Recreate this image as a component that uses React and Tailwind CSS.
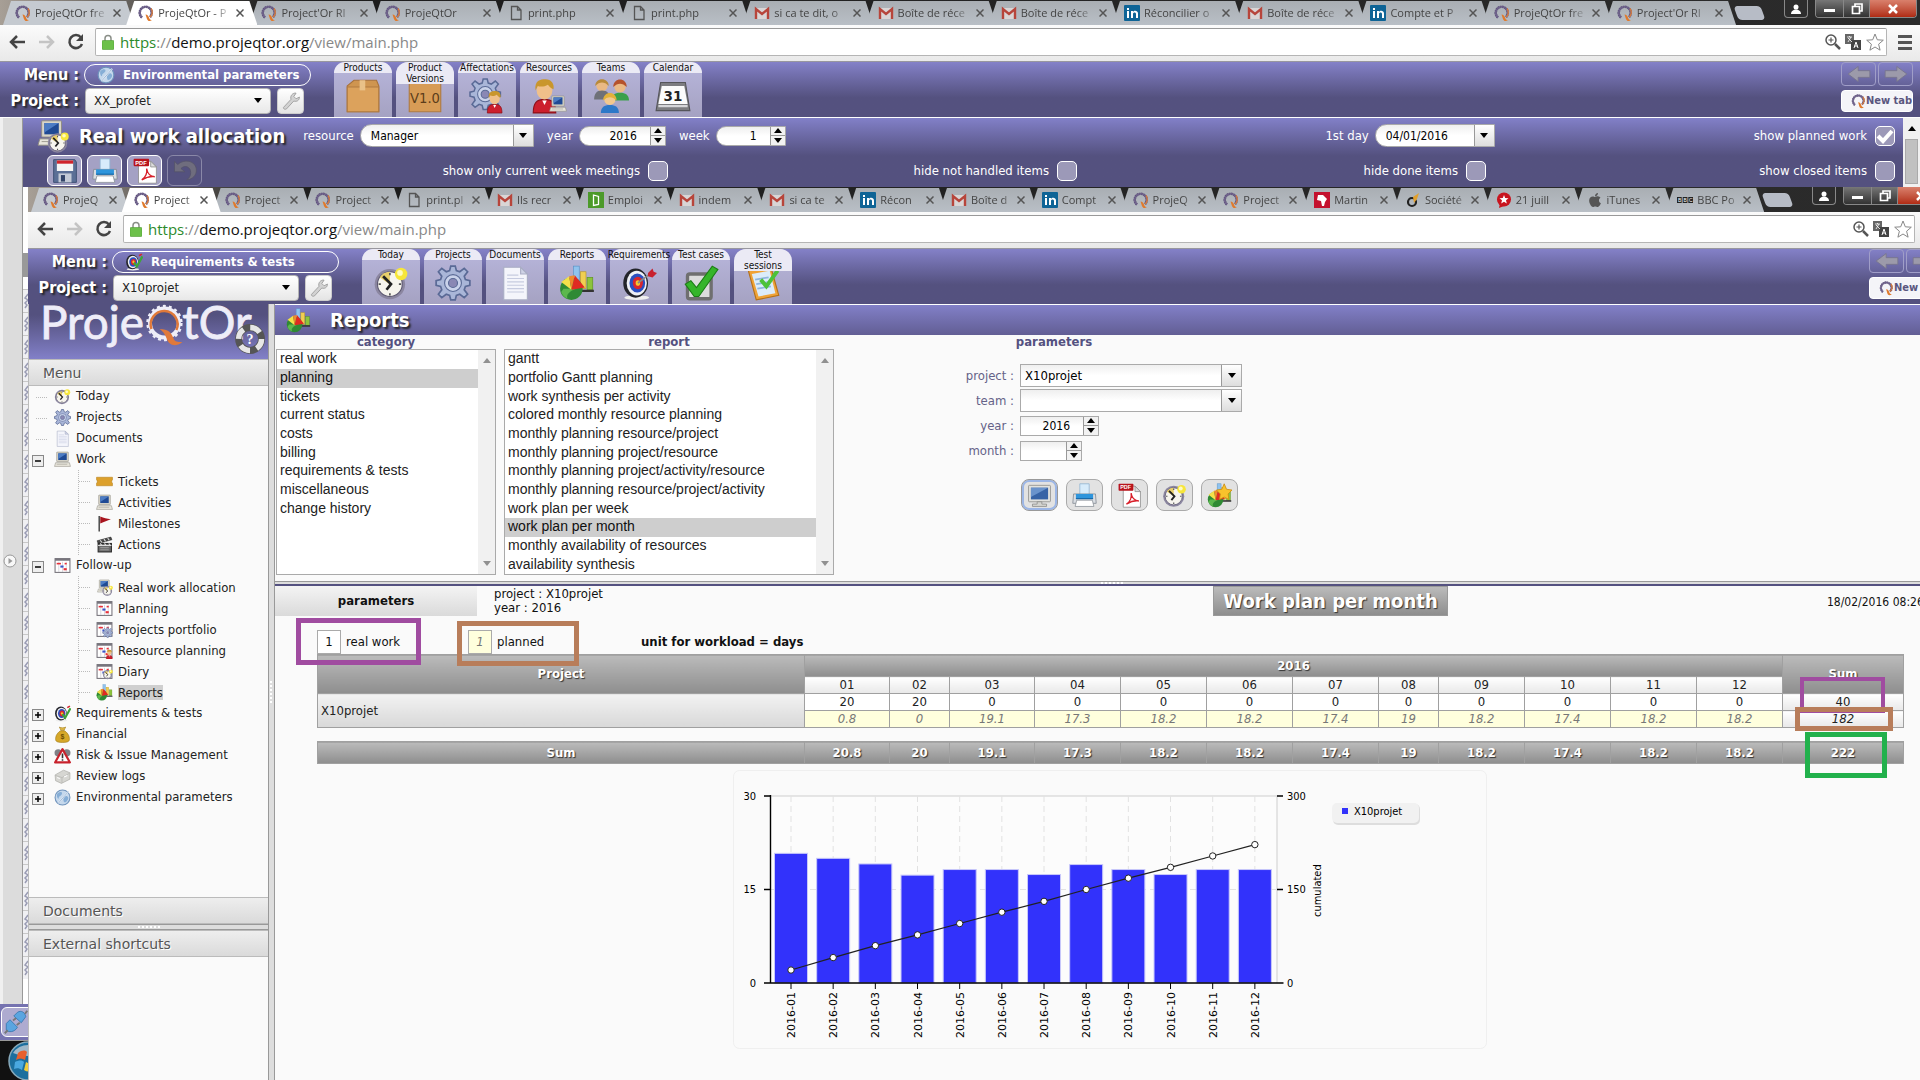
import { useState } from "react";
import { FaApple } from "react-icons/fa";

const outerTabs = [
  ["q", "ProjeQtOr fre"],
  ["q", "ProjeQtOr - P"],
  ["q", "Project'Or RI"],
  ["q", "ProjeQtOr"],
  ["page", "print.php"],
  ["page", "print.php"],
  ["gmail", "si ca te dit, o"],
  ["gmail", "Boîte de réce"],
  ["gmail", "Boîte de réce"],
  ["linkedin", "Réconcilier o"],
  ["gmail", "Boîte de réce"],
  ["linkedin", "Compte et P"],
  ["q", "ProjeQtOr fre"],
  ["q", "Project'Or RI"],
];

const innerTabs = [
  ["q", "ProjeQ"],
  ["q", "Project"],
  ["q", "Project"],
  ["q", "Project"],
  ["page", "print.pl"],
  ["gmail", "Ils recr"],
  ["green", "Emploi"],
  ["gmail", "indem"],
  ["gmail", "si ca te"],
  ["linkedin", "Récon"],
  ["gmail", "Boîte d"],
  ["linkedin", "Compt"],
  ["q", "ProjeQ"],
  ["q", "Project"],
  ["africa", "Martin"],
  ["societe", "Société"],
  ["star", "21 juill"],
  ["apple", "iTunes"],
  ["bbc", "BBC Po"],
];

const outerItems = [
  ["box", "Products"],
  ["version", "Product Versions"],
  ["affect", "Affectations"],
  ["resource", "Resources"],
  ["team", "Teams"],
  ["calendar", "Calendar"],
];

const innerItems = [
  ["clock", "Today"],
  ["gear", "Projects"],
  ["doc", "Documents"],
  ["report", "Reports"],
  ["target", "Requirements"],
  ["check", "Test cases"],
  ["session", "Test sessions"],
];

const tree = [
  { icon: "clock", label: "Today" },
  { icon: "gear", label: "Projects" },
  { icon: "doc", label: "Documents" },
  {
    icon: "computer",
    label: "Work",
    children: [
      ["ticket", "Tickets"],
      ["computer", "Activities"],
      ["flag", "Milestones"],
      ["clap", "Actions"],
    ],
  },
  {
    icon: "planning",
    label: "Follow-up",
    children: [
      ["allocation", "Real work allocation"],
      ["planning", "Planning"],
      ["portfolio", "Projects portfolio"],
      ["resplan", "Resource planning"],
      ["diary", "Diary"],
      ["report", "Reports"],
    ],
  },
  { icon: "target2", label: "Requirements & tests", closed: true },
  { icon: "money", label: "Financial", closed: true },
  { icon: "risk", label: "Risk & Issue Management", closed: true },
  { icon: "review", label: "Review logs", closed: true },
  { icon: "globe", label: "Environmental parameters", closed: true },
];

const categories = [
  "real work",
  "planning",
  "tickets",
  "current status",
  "costs",
  "billing",
  "requirements & tests",
  "miscellaneous",
  "change history",
];

const reports = [
  "gantt",
  "portfolio Gantt planning",
  "work synthesis per activity",
  "colored monthly resource planning",
  "monthly planning resource/project",
  "monthly planning project/resource",
  "monthly planning project/activity/resource",
  "monthly planning resource/project/activity",
  "work plan per week",
  "work plan per month",
  "monthly availability of resources",
  "availability synthesis",
];

const months = [
  { m: "01", real: 20, plan: "0.8", sum: 20.8 },
  { m: "02", real: 20, plan: "0", sum: 20 },
  { m: "03", real: 0, plan: "19.1", sum: 19.1 },
  { m: "04", real: 0, plan: "17.3", sum: 17.3 },
  { m: "05", real: 0, plan: "18.2", sum: 18.2 },
  { m: "06", real: 0, plan: "18.2", sum: 18.2 },
  { m: "07", real: 0, plan: "17.4", sum: 17.4 },
  { m: "08", real: 0, plan: "19", sum: 19 },
  { m: "09", real: 0, plan: "18.2", sum: 18.2 },
  { m: "10", real: 0, plan: "17.4", sum: 17.4 },
  { m: "11", real: 0, plan: "18.2", sum: 18.2 },
  { m: "12", real: 0, plan: "18.2", sum: 18.2 },
];

/* ---------- icons, all on a 32x32 grid ---------- */

const ClockArt = (
  <>
    <circle cx="15" cy="17" r="13.5" fill="#8b86a0" />
    <circle cx="15" cy="17" r="11" fill="#f7f5ee" stroke="#5d5872" strokeWidth="1" />
    <path d="M15 17V6A11 11 0 0 0 6 11Z" fill="#e9cf6a" />
    <path d="M9 10l7 7-4 5" fill="none" stroke="#222" strokeWidth="2.4" />
    <path d="M15 7v2M15 25v2M5 17h2M23 17h2" stroke="#555" strokeWidth="1.5" />
    <circle cx="25" cy="8" r="5.5" fill="#f7e63a" />
    <circle cx="24" cy="7" r="2.5" fill="#fffbc0" />
  </>
);

const GearArt = (
  <>
    <path
      d="M14 1h4l1 4 3 1 4-3 3 3-3 4 1 3 4 1v4l-4 1-1 3 3 4-3 3-4-3-3 1-1 4h-4l-1-4-3-1-4 3-3-3 3-4-1-3-4-1v-4l4-1 1-3-3-4 3-3 4 3 3-1z"
      fill="#a9b6d8"
      stroke="#5a6a96"
      strokeWidth="1.5"
    />
    <circle cx="16" cy="16" r="7.5" fill="#c9d2ea" stroke="#5a6a96" />
    <circle cx="16" cy="16" r="4" fill="#8a88b4" stroke="#5a6a96" />
  </>
);

const ComputerArt = (
  <>
    <rect x="5" y="2" width="22" height="18" rx="1" fill="#d8d5c8" stroke="#8d8a80" />
    <rect x="8" y="4.5" width="16" height="12.5" fill="#1f4a94" />
    <path d="M8 4.5h16L8 15z" fill="#4c7cc4" />
    <path d="M3 22h26l2 7H1z" fill="#e8e6dc" stroke="#8d8a80" />
    <path d="M5 25h20" stroke="#9a978c" />
  </>
);

const PlanArt = (
  <>
    <rect x="2" y="3" width="28" height="26" fill="#fff" stroke="#77747c" strokeWidth="2" />
    <path d="M2 5h28" stroke="#77747c" strokeWidth="4" />
    <path d="M9 9v19M16 9v19M23 9v19" stroke="#b9b6c2" />
    <rect x="5" y="11" width="8" height="3" fill="#e8303a" />
    <rect x="12" y="16" width="6" height="4" fill="#3b53c8" />
    <rect x="18" y="21" width="6" height="4" fill="#e8303a" />
    <rect x="20" y="11" width="4" height="3" fill="#e8303a" />
  </>
);

const PersonArt = (
  <>
    <path d="M2 31c0-9 3-12 10-12s10 3 10 12z" fill="#cc1f2d" stroke="#8b1019" />
    <ellipse cx="12" cy="11" rx="7" ry="8" fill="#f0c08a" />
    <path d="M4 11C3 2 8 1 13 1s8 4 7 9c-3-1-4-3-5-4-3 2-7 2-9 1z" fill="#c9962c" />
    <path d="M10 20l2 4 2-4" fill="#fff" />
  </>
);

const ReportArt = (
  <>
    <rect x="13" y="1" width="5" height="15" fill="#8fc3ee" stroke="#5a93c8" strokeWidth=".6" />
    <rect x="19" y="6" width="5" height="15" fill="#f0cf52" stroke="#b8982c" strokeWidth=".6" />
    <rect x="25" y="11" width="5" height="11" fill="#8cc43c" stroke="#5f9420" strokeWidth=".6" />
    <path d="M20 22h11v2H20z" fill="#333" />
    <circle cx="11" cy="21" r="10" fill="#2f8a34" />
    <path d="M2 24a9 9 0 0 0 6 6c-3-4 4-9 9-9H4z" fill="#5cb84e" />
    <path d="M11 22L2 15l7-5z" fill="#f4e04a" />
    <path d="M11 22L14 9l9 11z" fill="#e02a22" />
    <path d="M11 22L9 10l5-1z" fill="#f08a2c" />
  </>
);

const TargetArt = (
  <>
    <ellipse cx="14" cy="29" rx="11" ry="2" fill="#eee" />
    <ellipse cx="13" cy="16" rx="11" ry="13" fill="#23242a" />
    <ellipse cx="14" cy="16" rx="9" ry="11" fill="#eef0f4" />
    <ellipse cx="14.500" cy="16" rx="7" ry="8.500" fill="#2b4fc0" />
    <ellipse cx="15" cy="16" rx="4.500" ry="5.500" fill="#d8262e" />
    <ellipse cx="15" cy="16" rx="2" ry="2.500" fill="#f6c72c" />
  </>
);

const PrinterArt = (
  <>
    <path d="M10 1h12v14H10z" fill="#d7ecfb" stroke="#8fb4d0" />
    <path d="M2 14h28l1 12H1z" fill="#d9dde2" stroke="#7f8790" />
    <path d="M5 14h22v6H5z" fill="#2e95dc" />
    <path d="M6 22h20l2 8H4z" fill="#fff" stroke="#8a9199" />
    <path d="M5 20h22" stroke="#1668a8" strokeWidth="1.500" />
  </>
);

const PdfArt = (
  <>
    <path d="M8 4h15l7 7v20H8z" fill="#fff" stroke="#8c8c8c" />
    <path d="M23 4v7h7z" fill="#ddd" stroke="#8c8c8c" />
    <rect x="2" y="1" width="19" height="9" rx="1" fill="#b8141c" />
    <text x="4" y="8" fontSize="7" fontWeight="bold" fill="#fff" fontFamily="Liberation Sans">PDF</text>
    <path d="M12 27c5-3 7-9 6-14 1 6 5 10 10 10-6-1-11 1-16 4z" fill="none" stroke="#d8202a" strokeWidth="1.700" />
  </>
);

const art = {
  clock: ClockArt,
  gear: GearArt,
  computer: ComputerArt,
  planning: PlanArt,
  report: ReportArt,
  printer: PrinterArt,
  pdf: PdfArt,
  doc: (
    <>
      <path d="M6 2h15l6 6v23H6z" fill="#f4f5fb" stroke="#a9adc4" />
      <path d="M21 2v6h6z" fill="#cfd3e6" stroke="#a9adc4" />
      <path d="M9 9h10M9 12h15M9 15h15M9 18h15M9 21h15M9 24h15" stroke="#c6cbe0" />
    </>
  ),
  target: (
    <>
      {TargetArt}
      <path d="M15 16l12-9" stroke="#888" strokeWidth="1.500" />
      <path d="M24 7l4-4 1 3 3 1-4 4-4-1z" fill="#c8202e" />
    </>
  ),
  target2: (
    <>
      {TargetArt}
      <path d="M16 17l5 7L31 6" fill="none" stroke="#3da43a" strokeWidth="4" />
      <path d="M25 5l5-3" stroke="#d8262e" strokeWidth="3" />
    </>
  ),
  check: (
    <>
      <rect x="4" y="8" width="21" height="22" rx="2" fill="#dcdcdc" stroke="#6f6f6f" strokeWidth="3" />
      <path d="M2 17l5-3 5 6L26 1l5 3-17 24h-4z" fill="#35b52a" stroke="#1c7d16" />
    </>
  ),
  session: (
    <>
      <path d="M3 5l20-3 7 25-20 4z" fill="#f0a336" stroke="#b3701a" />
      <path d="M6 8l16-3 5 20-15 3z" fill="#dcecfa" />
      <path d="M9 13l12-2M10 17l12-2M11 21l12-2" stroke="#8fb6de" strokeWidth="1.500" />
      <path d="M8 1h9v4H9z" fill="#37993a" />
      <path d="M14 13l5 6L29 5" fill="none" stroke="#4cc23a" strokeWidth="3.500" />
    </>
  ),
  box: (
    <>
      <path d="M2 7l6-5h20l2 5v23H2z" fill="#cf9550" stroke="#a8713a" />
      <path d="M2 8h28v22H2z" fill="#dca25c" stroke="#b07b40" />
      <path d="M13 2h5v9h-5z" fill="#e9c188" />
    </>
  ),
  version: (
    <>
      <path d="M2 4h28v26H2z" fill="#d79c56" stroke="#b07b40" />
      <text x="16" y="22" textAnchor="middle" fontSize="13" fill="#5c3d1a" fontFamily="DejaVu Sans Condensed">V1.0</text>
    </>
  ),
  resource: (
    <>
      {PersonArt}
      <g transform="translate(16 15) scale(.5)">{ComputerArt}</g>
    </>
  ),
  affect: (
    <>
      <g transform="scale(.9)">{GearArt}</g>
      <g transform="translate(15 11) scale(.65)">{PersonArt}</g>
    </>
  ),
  team: (
    <>
      <circle cx="8" cy="7" r="5" fill="#eab984" />
      <path d="M2 7c0-8 12-8 12 0-4-4-8-4-12 0z" fill="#b98a3a" />
      <path d="M1 19c0-5 2-8 7-8s7 3 7 8z" fill="#6f7178" />
      <circle cx="24" cy="8" r="5" fill="#eab984" />
      <path d="M18 8c0-9 12-9 12 0-4-4-8-4-12 0z" fill="#b5522c" />
      <path d="M17 20c0-5 2-7 7-7s8 2 8 7z" fill="#3aa04a" />
      <circle cx="15" cy="19" r="5" fill="#f2c88e" />
      <path d="M9 20c0-9 12-9 12 0-4-4-8-4-12 0z" fill="#e2b13a" />
      <path d="M7 31c0-5 3-7 8-7s8 2 8 7z" fill="#2d78c8" />
    </>
  ),
  calendar: (
    <>
      <path d="M5 4h22l4 25H1z" fill="#7c7c80" stroke="#55555a" />
      <path d="M6 7h20l3 16H3z" fill="#fbfbfb" />
      <path d="M3 25h26" stroke="#d5d5d8" strokeWidth="2" />
      <text x="16" y="20" textAnchor="middle" fontSize="12" fontWeight="bold" fill="#222" fontFamily="DejaVu Sans">31</text>
    </>
  ),
  ticket: <path d="M1 8h30v5c-2 1-2 5 0 6v5H1v-5c2-1 2-5 0-6z" fill="#dca02c" stroke="#b47c14" />,
  flag: (
    <>
      <path d="M6 2v29" stroke="#333" strokeWidth="2.500" />
      <path d="M8 3c7 3 12 4 20 5-7 2-12 5-20 8z" fill="#a8141e" />
    </>
  ),
  clap: (
    <>
      <path d="M2 9L28 2l2 5L4 14z" fill="#4a4a4a" stroke="#222" />
      <rect x="4" y="14" width="25" height="16" fill="#6a6a6a" stroke="#2a2a2a" strokeWidth="2" />
      <path d="M8 8l3 4M15 6l3 4M22 4l3 4M4 18h25M8 14l3 4M16 14l3 4M24 14l3 4" stroke="#ddd" strokeWidth="2" />
      <path d="M8 22h16M8 26h16" stroke="#aaa" strokeWidth="1.500" />
    </>
  ),
  allocation: (
    <>
      <g transform="translate(2 0) scale(.85)">{ComputerArt}</g>
      <g transform="translate(11 11) scale(.68)">{ClockArt}</g>
    </>
  ),
  portfolio: (
    <>
      {PlanArt}
      <g transform="translate(12 12) scale(.62)">{GearArt}</g>
    </>
  ),
  resplan: (
    <>
      {PlanArt}
      <g transform="translate(18 14) scale(.58)">{PersonArt}</g>
    </>
  ),
  diary: (
    <>
      {PlanArt}
      <g transform="translate(12 11) scale(.64)">{ClockArt}</g>
    </>
  ),
  money: (
    <>
      <path d="M12 9h8c8 6 9 11 9 16 0 4-3 6-13 6S3 29 3 25c0-5 1-10 9-16z" fill="#d6a82a" stroke="#96700e" />
      <path d="M10 2c4 2 8 2 12 0l-3 6h-6z" fill="#e5bd4a" stroke="#96700e" />
      <text x="16" y="25" textAnchor="middle" fontSize="13" fontWeight="bold" fill="#6b4e06" fontFamily="Liberation Sans">$</text>
    </>
  ),
  risk: (
    <>
      <circle cx="8" cy="11" r="7" fill="#7f8086" />
      <circle cx="24" cy="11" r="7" fill="#7f8086" />
      <path d="M16 4l14 25H2z" fill="#fff" stroke="#c8222c" strokeWidth="4" strokeLinejoin="round" />
      <path d="M16 12v9M16 23v3" stroke="#333" strokeWidth="3" />
    </>
  ),
  review: (
    <>
      <path d="M2 13l16-9 12 5v12L14 29 3 24z" fill="#d6d6d2" stroke="#9a9a96" />
      <path d="M3 14l12 4 14-8M15 18v10" fill="none" stroke="#aaaaa6" />
      <path d="M6 18l5 2M19 17l6-3" stroke="#fff" strokeWidth="2" />
    </>
  ),
  globe: (
    <>
      <circle cx="16" cy="16" r="14" fill="#c5d8ec" stroke="#6f93bc" strokeWidth="2" />
      <path d="M6 9c5-5 10-4 9 0s-6 4-6 8-5-2-3-8zM18 14c6-3 11 1 8 6s-7 7-8 2 0-5 0-8z" fill="#86aed6" />
      <path d="M8 27L27 5" stroke="#eef4fb" strokeWidth="3" />
      <path d="M8 27L27 5" stroke="#5c84b4" />
    </>
  ),
  disk: (
    <>
      <path d="M2 2h26l2 3v25H2z" fill="#5b6f96" stroke="#34456a" />
      <rect x="6" y="3" width="20" height="13" fill="#f4f4f4" />
      <rect x="6" y="3" width="20" height="4" fill="#d0242c" />
      <rect x="8" y="19" width="16" height="11" fill="#c4cad6" />
      <rect x="11" y="21" width="5" height="8" fill="#34456a" />
    </>
  ),
  undo: <path d="M3 4v13h13l-5-4c5-5 12-2 12 5 0 4-2 7-5 9 8-1 12-6 12-12C30 4 16 0 7 8z" fill="#6f6d7e" stroke="#55536a" />,
  screen: (
    <>
      <rect x="2" y="3" width="28" height="21" rx="1" fill="#e2e2de" stroke="#8b8b88" />
      <rect x="5" y="6" width="22" height="15" fill="#3763a6" />
      <path d="M5 6h22L5 18z" fill="#6a93cc" />
      <path d="M13 24h6v3h6v3H7v-3h6z" fill="#d4d4d0" stroke="#8b8b88" />
    </>
  ),
  star: (
    <>
      {ReportArt}
      <path d="M22 1l3 7 7 1-5 5 1 7-6-3-6 3 1-7-5-5 7-1z" fill="#f8c32c" stroke="#c98a10" />
    </>
  ),
  wrench: (
    <path d="M3 27l13-14c-2-6 3-12 9-11l-4 6 4 4 6-3c0 6-5 9-10 7L8 30c-3 2-7-1-5-3z" fill="#d2d2d2" stroke="#999" strokeWidth="1.500" />
  ),
  plug: (
    <>
      <path d="M18 3c5-3 10 0 11 6l-6 8L13 8z" fill="#5aa5e0" stroke="#2f6fa8" />
      <path d="M3 18l5-5 10 10c-4 7-12 7-15 4z" fill="#5aa5e0" stroke="#2f6fa8" />
      <path d="M1 31l4-4M28 5l3-4M12 14l4-3M17 20l4-3" stroke="#777" strokeWidth="2.500" />
    </>
  ),
};

function Icon({ name, className = "size-4" }) {
  return (
    <svg viewBox="0 0 32 32" className={`shrink-0 ${className}`} aria-hidden="true">
      {art[name]}
    </svg>
  );
}

function QMark({ className = "size-4" }) {
  return (
    <svg viewBox="0 0 16 18" className={`shrink-0 ${className}`} aria-hidden="true">
      <path d="M4 13.500A6 6 0 1 1 12 13" fill="none" stroke="#5a4d78" strokeWidth="2.600" strokeDasharray="1.600 .5" />
      <path d="M4 13.500A6 6 0 1 1 12 13" fill="none" stroke="#6e618a" strokeWidth="1.600" />
      <path d="M13 4.500a6 6 0 0 1-1 8.500" fill="none" stroke="#d67a3c" strokeWidth="1.400" />
      <path d="M7.500 10.500c2 0 3 1.500 3.500 3 .5 2 1.500 2.500 3 2.500-2.500 2-4.500 1-5.200-1.500-.4-1.500-.8-2.500-1.300-4z" fill="#e07a2c" />
    </svg>
  );
}

function Favicon({ name }) {
  if (name === "q") return <QMark className="h-[18px] w-4" />;
  if (name === "apple") return <FaApple className="size-4 shrink-0 text-[#555]" />;
  return (
    <svg viewBox="0 0 16 16" className="size-4 shrink-0" aria-hidden="true">
      {name === "page" && (
        <path d="M3.500 1.500h6l3.500 3.500v9.500h-9.500zM9.500 1.500v3.500h3.500" fill="none" stroke="#555" strokeWidth="1.300" />
      )}
      {name === "gmail" && (
        <>
          <rect x="1" y="3" width="14" height="11" fill="#d9d5d5" />
          <path d="M2 14V4l6 5 6-5v10" fill="none" stroke="#b7453b" strokeWidth="2.400" />
        </>
      )}
      {name === "linkedin" && (
        <>
          <rect width="16" height="16" rx="1" fill="#0e6496" />
          <path d="M3 6h2v7H3zM3 3h2v2H3zM7 6h2v1c1-2 5-1.500 5 1.500V13h-2V9c0-2-3-2-3 0v4H7z" fill="#fff" />
        </>
      )}
      {name === "green" && (
        <>
          <rect width="16" height="16" fill="#4c9a2a" />
          <path d="M5.500 3l5 1.500v8l-5 1z" fill="none" stroke="#fff" strokeWidth="1.300" />
        </>
      )}
      {name === "africa" && (
        <>
          <rect width="16" height="16" fill="#c4112e" />
          <path d="M4 3h5l4 4-2 3-1 4H8L7 9 3 8z" fill="#fff" />
        </>
      )}
      {name === "societe" && (
        <>
          <circle cx="7" cy="10" r="4" fill="none" stroke="#222" strokeWidth="2.200" />
          <path d="M8 5l6-4-2 6-3 4z" fill="#e2a02c" />
        </>
      )}
      {name === "star" && (
        <>
          <circle cx="8" cy="7.500" r="7" fill="#c8141e" />
          <path d="M3 16l1-5 4 3z" fill="#c8141e" />
          <path d="M8 3l1.200 3 3.300.2-2.500 2 .8 3.300L8 9.700 5.200 11.500l.8-3.300-2.500-2L6.800 6z" fill="#fff" />
        </>
      )}
      {name === "bbc" && (
        <>
          <path d="M0 5h4.700v6H0zM5.700 5h4.700v6H5.700zM11.300 5H16v6h-4.700z" fill="#222" />
          <text x="1" y="10" fontSize="5" fill="#fff" fontFamily="Liberation Sans">B</text>
          <text x="6.500" y="10" fontSize="5" fill="#fff" fontFamily="Liberation Sans">B</text>
          <text x="12" y="10" fontSize="5" fill="#fff" fontFamily="Liberation Sans">C</text>
        </>
      )}
    </svg>
  );
}

/* ---------- browser frame ---------- */

function BrowserBar({ tabs }) {
  return (
    <div className="shrink-0 font-['Open_Sans',sans-serif]">
      <div className="flex h-[25px] items-start bg-linear-to-r from-[#a79f96] via-[#1c1c1c] via-15% to-[#2c2c2c]">
        <div className="flex h-full min-w-0 flex-1 items-end pl-[3px]">
          {tabs.map(([icon, label], i) => (
            <div
              key={i}
              className={
                "relative -mr-2 flex h-6 min-w-0 flex-1 items-center gap-1 rounded-t-md pr-[13px] pl-3 text-[11px] text-[#444] [clip-path:polygon(8px_0,calc(100%-8px)_0,100%_100%,0_100%)] " +
                (i === 1 ? "z-10 bg-white" : i === 0 ? "bg-[#c5cad0]" : "bg-linear-to-b from-[#a9aeb3] to-[#b9bfc6]")
              }
            >
              <Favicon name={icon} />
              <span className="min-w-0 flex-1 whitespace-nowrap [mask-image:linear-gradient(to_right,black_75%,transparent)]">
                {label}
              </span>
              <svg viewBox="0 0 8 8" className="size-2 shrink-0" aria-hidden="true">
                <path d="M.5.5l7 7M7.500.5l-7 7" stroke="#555" strokeWidth="1.500" />
              </svg>
            </div>
          ))}
        </div>
        <div className="flex w-[192px] shrink-0 items-start gap-[7px] pl-2">
          <div className="mt-[6px] h-[14px] w-[27px] skew-x-[20deg] rounded-sm bg-[#b7bcc6]" />
          <button className="ml-[14px] flex h-[18px] w-6 items-center justify-center rounded-b border border-t-0 border-[#888] bg-[#2d2d2d]" aria-label="User">
            <svg viewBox="0 0 10 10" className="size-[10px]">
              <circle cx="5" cy="3" r="2.500" fill="#fff" />
              <path d="M0 10c0-6 10-6 10 0z" fill="#fff" />
            </svg>
          </button>
          <div className="flex h-[18px] overflow-hidden rounded-b border border-t-0 border-[#888]">
            <button className="flex w-7 items-center justify-center border-r border-[#888] bg-linear-to-b from-[#777] to-[#333]" aria-label="Minimize">
              <span className="mt-1 h-[3px] w-[11px] bg-white" />
            </button>
            <button className="flex w-[26px] items-center justify-center border-r border-[#888] bg-linear-to-b from-[#777] to-[#333]" aria-label="Restore">
              <svg viewBox="0 0 12 12" className="size-3">
                <path d="M4 3V1h7v7H9M1.500 3.500h7v7h-7z" fill="none" stroke="#fff" strokeWidth="1.700" />
              </svg>
            </button>
            <button className="flex w-[46px] items-center justify-center bg-linear-to-b from-[#d9806c] to-[#b02a12]" aria-label="Close">
              <svg viewBox="0 0 10 10" className="size-[10px]">
                <path d="M1 1l8 8M9 1L1 9" stroke="#fff" strokeWidth="2.500" />
              </svg>
            </button>
          </div>
        </div>
      </div>
      <div className="flex h-9 items-center bg-linear-to-b from-[#fbfbfb] to-[#e9e9e9] pr-2 pb-[2px] pl-[9px]">
        <svg viewBox="0 0 80 20" className="h-5 w-20 shrink-0" aria-hidden="true">
          <path d="M16 10H3M8 4l-6 6 6 6" fill="none" stroke="#444" strokeWidth="2.500" />
          <path d="M30 10h13M38 4l6 6-6 6" fill="none" stroke="#c4c4c4" strokeWidth="2.500" />
          <path d="M72 5.500A6.500 6.500 0 1 0 73 12" fill="none" stroke="#444" strokeWidth="2.500" />
          <path d="M74 2v7h-7z" fill="#444" />
        </svg>
        <div className="ml-[6px] flex h-[28px] flex-1 items-center rounded-xs border border-[#b5b5b5] border-t-[#999] bg-white pr-[2px] pl-[6px]">
          <svg viewBox="0 0 12 16" className="h-4 w-3 shrink-0" aria-hidden="true">
            <path d="M3 8V4.500a3 3 0 0 1 6 0V8" fill="none" stroke="#8a8f88" strokeWidth="1.500" />
            <rect y="6.500" width="12" height="9" rx="1" fill="#6cc04a" stroke="#4f9a34" strokeWidth=".6" />
          </svg>
          <span className="ml-[6px] flex-1 text-[15px] leading-5 text-[#888]">
            <span className="text-[#2b8a2b]">https</span>://<span className="text-[#111]">demo.projeqtor.org</span>/view/main.php
          </span>
          <svg viewBox="0 0 60 18" className="h-[18px] w-[60px]" aria-hidden="true">
            <circle cx="7" cy="7" r="5" fill="none" stroke="#555" strokeWidth="1.500" />
            <path d="M11 11l5 5" stroke="#555" strokeWidth="2.500" />
            <path d="M4.500 7h5M7 4.500v5" stroke="#555" strokeWidth="1.200" />
            <rect x="21" y="1" width="9" height="10" fill="#666" />
            <rect x="27" y="7" width="10" height="10" fill="#444" />
            <path d="M23 4h5M25.500 3v1M24 9l3-5M24 5l4 4" stroke="#fff" strokeWidth=".8" />
            <path d="M30 15l2-6 2 6M30.500 13h3" stroke="#fff" fill="none" />
            <path d="M51 1l2.300 5.800 6 .4-4.700 4 1.500 6L51 14l-5.100 3.200 1.500-6-4.700-4 6-.4z" fill="#fff" stroke="#888" />
          </svg>
        </div>
        <button className="ml-[11px] flex w-[14px] flex-col gap-[3px]" aria-label="Browser menu">
          <span className="h-[3px] bg-[#555]" />
          <span className="h-[3px] bg-[#555]" />
          <span className="h-[3px] bg-[#555]" />
        </button>
      </div>
    </div>
  );
}

/* ---------- ProjeQtOr header ---------- */

function AppHeader({ menuIcon, menu, project, items }) {
  const id = "project-" + project;
  return (
    <header className="flex h-[56px] shrink-0 border-t border-[#98979e] bg-linear-to-b from-[#8481c8] to-[#54517f] to-65% font-['DejaVu_Sans_Condensed','DejaVu_Sans',sans-serif]">
      <div className="w-[334px] shrink-0 pt-[1px]">
        <div className="flex h-[24px] items-center">
          <span className="w-[79px] text-right text-[16px] font-bold text-white [text-shadow:2px_2px_2px_#222]">Menu&nbsp;:</span>
          <button className="ml-[5px] flex h-[22px] w-[227px] items-center rounded-full border border-white pl-3 text-[13px] font-bold text-white">
            <Icon name={menuIcon} className="mr-2 size-[18px]" />
            {menu}
          </button>
        </div>
        <div className="flex h-[27px] items-center">
          <label htmlFor={id} className="w-[79px] text-right text-[16px] font-bold text-white [text-shadow:2px_2px_2px_#222]">
            Project&nbsp;:
          </label>
          <div className="relative ml-[6px] w-[186px]">
            <select id={id} className="h-[26px] w-full appearance-none rounded border border-[#b4b4b4] bg-linear-to-b from-white to-[#e8e8e8] pl-2 text-[13px] text-[#222]">
              <option>{project}</option>
            </select>
            <DownArrow className="absolute top-[10px] right-[9px]" />
          </div>
          <button className="ml-[6px] flex h-[26px] w-[27px] items-center justify-center rounded border border-[#ccc] bg-linear-to-b from-white to-[#e4e4e4]" aria-label="Project options">
            <Icon name="wrench" className="size-[18px]" />
          </button>
        </div>
      </div>
      <nav className="flex flex-1 gap-1">
        {items.map(([icon, label]) => (
          <a
            key={label}
            href="#"
            className="relative flex w-[58px] flex-col items-center justify-end rounded-t-xl bg-linear-to-b from-[#b8b6dc] to-[#a5a2c2] pb-[3px]"
          >
            <span className="absolute inset-x-0 top-0 z-10 flex justify-center rounded-t-xl bg-[#ebeaf5] text-center text-[10px] leading-[11px] text-[#111]">{label}</span>
            <Icon name={icon} className="size-9" />
          </a>
        ))}
      </nav>
      <div className="flex w-[79px] shrink-0 flex-wrap content-start gap-x-[2px] gap-y-1">
        {["M3 12L15 3v5h14v8H15v5z", "M29 12L17 3v5H3v8h14v5z"].map((d, i) => (
          <button key={d} className="flex h-6 w-[35px] items-center justify-center rounded border border-[#a09ec8]" aria-label={i ? "Next" : "Previous"}>
            <svg viewBox="0 0 32 24" className="h-5 w-7">
              <path d={d} fill="#9c9aaa" stroke="#77758c" />
            </svg>
          </button>
        ))}
        <button className="flex h-[22px] w-[72px] items-center overflow-hidden rounded border border-white bg-[#f4f4f8] pl-[9px] text-[11px] font-bold whitespace-nowrap text-[#5a567e]">
          <QMark className="h-4 w-[15px]" />
          New tab
        </button>
      </div>
    </header>
  );
}

function DownArrow({ className = "" }) {
  return (
    <svg viewBox="0 0 8 5" className={`pointer-events-none h-[5px] w-2 ${className}`} aria-hidden="true">
      <path d="M0 0h8L4 5z" fill="#000" />
    </svg>
  );
}

function Combo({ id, value, options, round, className }) {
  return (
    <div className={`flex h-[23px] border border-[#aaa] bg-linear-to-b from-[#efefef] to-white to-50% ${round ? "rounded-l-full" : ""} ${className}`}>
      <select
        id={id}
        defaultValue={value}
        className={`min-w-0 flex-1 appearance-none text-black ${round ? "pl-[10px] text-[12px]" : "pl-1 text-[13px]"}`}
      >
        {options.map((o) => (
          <option key={o}>{o}</option>
        ))}
      </select>
      <span className="flex w-5 items-center justify-center border-l border-[#999] bg-linear-to-b from-white to-[#ddd]">
        <DownArrow />
      </span>
    </div>
  );
}

function Spinner({ id, value, round, className }) {
  const [val, setVal] = useState(value);
  const step = (n) => setVal(String((Number(val) || 0) + n));
  return (
    <div className={`flex h-5 border border-[#aaa] bg-linear-to-b from-[#efefef] to-white to-50% ${round ? "rounded-l-full" : ""} ${className}`}>
      <input
        id={id}
        value={val}
        onChange={(e) => setVal(e.target.value)}
        className="w-full min-w-0 flex-1 pr-[13px] text-right text-[12px] text-black"
      />
      <div className="flex w-[15px] flex-col border-l border-[#999]">
        <button type="button" onClick={() => step(1)} className="flex flex-1 items-center justify-center border-b border-[#999] bg-[#f2f2f2]" aria-label="Increase">
          <DownArrow className="rotate-180" />
        </button>
        <button type="button" onClick={() => step(-1)} className="flex flex-1 items-center justify-center bg-[#f2f2f2]" aria-label="Decrease">
          <DownArrow />
        </button>
      </div>
    </div>
  );
}

function Toggle({ label, checked }) {
  return (
    <label className="flex items-center justify-end gap-2">
      {label}
      <span className="relative flex size-5">
        <input type="checkbox" defaultChecked={checked} className="peer size-5 appearance-none rounded-[5px] border border-white bg-[#9c99b8]" />
        <svg viewBox="0 0 20 20" className="pointer-events-none absolute inset-0 hidden size-5 peer-checked:block" aria-hidden="true">
          <path d="M3 10l5 5 9-10" fill="none" stroke="#fff" strokeWidth="4" />
        </svg>
      </span>
    </label>
  );
}

/* ---------- back window: real work allocation ---------- */

function AllocationBar() {
  return (
    <div className="h-[69px] bg-linear-to-b from-[#8280c8] to-[#54517f] to-55% font-['DejaVu_Sans_Condensed','DejaVu_Sans',sans-serif] text-[13px] text-white">
      <div className="flex h-[35px] items-center pr-2 pl-3">
        <Icon name="allocation" className="size-[34px]" />
        <h1 className="ml-[10px] text-[20px] font-bold whitespace-nowrap [text-shadow:2px_2px_2px_#222]">Real work allocation</h1>
        <label htmlFor="resource" className="ml-[18px]">resource</label>
        <Combo id="resource" value="Manager" options={["Manager"]} round className="ml-[6px] w-[174px]" />
        <label htmlFor="alloc-year" className="ml-[13px]">year</label>
        <Spinner id="alloc-year" value="2016" round className="ml-[6px] w-[87px]" />
        <label htmlFor="alloc-week" className="ml-[13px]">week</label>
        <Spinner id="alloc-week" value="1" round className="ml-[6px] w-[70px]" />
        <label htmlFor="first-day" className="ml-auto">1st day</label>
        <Combo id="first-day" value="04/01/2016" options={["04/01/2016"]} round className="mr-[259px] ml-[6px] w-[120px]" />
        <Toggle label="show planned work" checked />
      </div>
      <div className="flex h-[34px] items-center pt-[1px] pr-2 pl-6">
        <div className="flex w-[212px] gap-[5px]">
          {["disk", "printer", "pdf", "undo"].map((name) => (
            <button
              key={name}
              aria-label={name}
              className={
                "flex h-[31px] w-[35px] items-center justify-center rounded-md border " +
                (name === "undo" ? "border-[#8a88a8]" : "border-white bg-[#a4a1c4]")
              }
            >
              <Icon name={name} className="size-[26px]" />
            </button>
          ))}
        </div>
        <div className="grid flex-1 grid-cols-4">
          <Toggle label="show only current week meetings" />
          <Toggle label="hide not handled items" />
          <Toggle label="hide done items" />
          <Toggle label="show closed items" />
        </div>
      </div>
    </div>
  );
}

function BackWindow() {
  return (
    <div className="flex h-full flex-col bg-white">
      <BrowserBar tabs={outerTabs} />
      <AppHeader menuIcon="globe" menu="Environmental parameters" project="XX_profet" items={outerItems} />
      <div className="flex min-h-0 flex-1 border-t border-white">
        <div className="flex w-[23px] shrink-0 items-center border-r border-l-[3px] border-r-[#999] border-l-[#f0f0f0] bg-[#dcdcdc]">
          <svg viewBox="0 0 14 14" className="size-[14px]" aria-hidden="true">
            <circle cx="7" cy="7" r="6" fill="#f8f8f8" stroke="#999" />
            <path d="M5.500 4l4 3-4 3z" fill="#999" />
          </svg>
        </div>
        <div className="min-w-0 flex-1 overflow-hidden">
          <AllocationBar />
          <div className="h-[66px]" />
          <div className="h-6 bg-[#999]" />
          <div className="h-3" />
          {Array.from({ length: 30 }, (_, i) => (
            <div key={i} className="flex h-[23px] items-center border-t border-[#c8c8c8] bg-[#f0f0f3]">
              <svg viewBox="0 0 6 16" className="h-4 w-[6px]" aria-hidden="true">
                <path d="M5 1L2 5l3 2-3 3 2 2-2 3" fill="none" stroke="#9a9cb4" strokeWidth="1.500" />
              </svg>
            </div>
          ))}
        </div>
        <div className="flex w-[17px] shrink-0 flex-col items-center bg-[#f1f1f1] pt-2">
          <DownArrow className="rotate-180" />
          <div className="mt-2 h-[45px] w-[13px] border border-[#aaa] bg-[#c1c1c1]" />
        </div>
      </div>
      <div className="flex h-9 shrink-0 items-center bg-[#7673b0] pl-[1px]">
        <button className="flex h-[30px] w-9 items-center justify-start rounded-md border border-white bg-[#aeabd0] pl-[2px]" aria-label="Connection">
          <Icon name="plug" className="size-6" />
        </button>
      </div>
      <div className="flex h-10 shrink-0 items-center border-t border-[#999] bg-[#111] pl-2">
        <svg viewBox="0 0 40 40" className="size-10" aria-hidden="true">
          <circle cx="20" cy="20" r="19" fill="#1c6f9e" stroke="#8ab" strokeWidth="1.500" />
          <path d="M5 12a18 18 0 0 1 30 0c-10 4-20 4-30 0z" fill="#9fb8c8" />
          <path d="M10 12c4-3 7-3 9-1l-2 8c-3-2-6-2-9 0z" fill="#e8602c" />
          <path d="M7 21c4-2 7-2 9 0l-2 8c-3-2-5-2-8-1z" fill="#4aa8e0" />
          <path d="M18 21c3 2 6 2 9 0l-2 8c-3 2-6 2-9 0z" fill="#f2cc3a" />
        </svg>
      </div>
    </div>
  );
}

/* ---------- front window: sidebar ---------- */

function Logo() {
  return (
    <svg viewBox="0 0 240 55" className="block h-[55px] w-full" aria-label="ProjeQtOr">
      <g fill="#eeedf8" stroke="#eeedf8" strokeWidth=".8" fontFamily="Lato, sans-serif" fontSize="46">
        <text x="11" y="35">Proje</text>
        <text x="154" y="35">tOr</text>
      </g>
      <circle cx="136" cy="19" r="14.500" fill="none" stroke="#eeedf8" strokeWidth="4" />
      <circle cx="136" cy="19" r="17" fill="none" stroke="#eeedf8" strokeWidth="2.500" strokeDasharray="3 3" />
      <path d="M123 25a13.500 13.500 0 1 1 25 1" fill="none" stroke="#e0793a" strokeWidth="2.500" />
      <path d="M131 25c9 0 12 4 14 9 1 4 4 4 9 4-7 6-14 3-16-4-2-5-4-7-7-9z" fill="#e0793a" />
      <circle cx="222" cy="35" r="11.500" fill="none" stroke="#555" strokeWidth="7" />
      <circle cx="222" cy="35" r="11.500" fill="none" stroke="#e6e6e6" strokeWidth="5.500" strokeDasharray="11 7" />
      <text x="222" y="40" textAnchor="middle" fontSize="14" fontWeight="bold" fill="#fff" fontFamily="Liberation Serif">?</text>
    </svg>
  );
}

function PaneTitle({ children }) {
  return (
    <h2 className="h-[27px] shrink-0 border-y border-[#bbb] bg-linear-to-b from-[#eee] to-[#dadada] pl-[14px] font-['DejaVu_Sans',sans-serif] text-[14px] leading-[26px] text-[#555] [text-shadow:1px_1px_0_#fff]">
      {children}
    </h2>
  );
}

function Expander({ open }) {
  return (
    <button
      aria-label={open ? "Collapse" : "Expand"}
      className="flex size-3 items-center justify-center border border-[#888] bg-[#eee]"
    >
      <svg viewBox="0 0 6 6" className="size-[6px]">
        <path d={open ? "M0 3h6" : "M0 3h6M3 0v6"} stroke="#000" strokeWidth="1.500" />
      </svg>
    </button>
  );
}

function Sidebar() {
  return (
    <aside className="flex w-[240px] shrink-0 flex-col border-l border-[#bbb] bg-[#fafafa]">
      <div className="bg-linear-to-b from-[#54517f] from-20% to-[#8280c8]">
        <Logo />
      </div>
      <PaneTitle>Menu</PaneTitle>
      <ul className="flex-1 text-[13px] text-[#222]">
        {tree.map((node) => (
          <li key={node.label}>
            <div className="flex h-[21px] items-center">
              <span className="flex w-[25px] pt-[2px] pl-[3px]">
                {node.children || node.closed ? (
                  <Expander open={!node.closed} />
                ) : (
                  <span className="ml-1 w-[11px] border-t border-dotted border-[#bbb]" />
                )}
              </span>
              <Icon name={node.icon} className="size-[17px]" />
              <a href="#" className="ml-[5px] pb-[1px] leading-4 whitespace-nowrap">{node.label}</a>
            </div>
            {node.children && (
              <ul className="ml-[49px] border-l border-dotted border-[#bbb] pt-[1px]">
                {node.children.map(([icon, label]) => (
                  <li key={label} className="flex h-[21px] items-center">
                    <span className="w-[11px] border-t border-dotted border-[#bbb]" />
                    <Icon name={icon} className="ml-[6px] size-[17px]" />
                    <a href="#" className={`ml-[5px] leading-[15px] whitespace-nowrap ${label === "Reports" ? "bg-[#cfcfcf]" : ""}`}>
                      {label}
                    </a>
                  </li>
                ))}
              </ul>
            )}
          </li>
        ))}
      </ul>
      <PaneTitle>Documents</PaneTitle>
      <div className="flex h-[6px] shrink-0 items-center justify-center border-y border-[#999] bg-[#ddd]">
        <span className="w-[22px] border-t-2 border-dotted border-white" />
      </div>
      <PaneTitle>External shortcuts</PaneTitle>
      <div className="h-[123px] shrink-0" />
    </aside>
  );
}

/* ---------- front window: reports ---------- */

function ListBox({ id, items, value, label, className }) {
  return (
    <div className={className}>
      <label htmlFor={id} className="block h-[14px] text-center leading-[14px] font-bold text-[#545180]">
        {label}
      </label>
      <div className="flex h-[226px] border border-[#aaa] bg-white">
        <select
          id={id}
          size={12}
          defaultValue={value}
          className="min-w-0 flex-1 overflow-hidden font-['Liberation_Sans',sans-serif] text-[14px] text-[#222] outline-none"
        >
          {items.map((item) => (
            <option key={item} className="h-[19px] px-[3px] leading-[18px] nth-[3n]:h-[18px]">
              {item}
            </option>
          ))}
        </select>
        <span className="flex w-[17px] flex-col items-center justify-between bg-[#f1f1f1] py-2">
          <DownArrow className="rotate-180 opacity-40" />
          <DownArrow className="opacity-40" />
        </span>
      </div>
    </div>
  );
}

function ReportForm() {
  return (
    <form className="flex h-[246px] shrink-0 gap-2 pl-[1px] text-[13px]">
      <ListBox id="category" label="category" items={categories} value="planning" className="w-[220px]" />
      <ListBox id="report" label="report" items={reports} value="work plan per month" className="w-[330px]" />
      <div className="-ml-2 w-[440px] text-[#656288]">
        <h3 className="h-7 text-center leading-[14px] font-bold text-[#545180]">parameters</h3>
        <div className="grid auto-rows-[25px] grid-cols-[180px_1fr] items-center gap-x-[6px]">
          <label htmlFor="p-project" className="text-right">project :</label>
          <Combo id="p-project" value="X10projet" options={["X10projet"]} className="w-[222px]" />
          <label htmlFor="p-team" className="text-right">team :</label>
          <Combo id="p-team" value="" options={[""]} className="w-[222px]" />
          <label htmlFor="p-year" className="text-right">year :</label>
          <Spinner id="p-year" value="2016" className="w-[79px]" />
          <label htmlFor="p-month" className="text-right">month :</label>
          <Spinner id="p-month" value="" className="w-[62px]" />
        </div>
        <div className="mt-4 flex gap-2 pl-[187px]">
          {["screen", "printer", "pdf", "clock", "star"].map((name) => (
            <button
              key={name}
              type="button"
              aria-label={name}
              className={
                "flex h-8 w-[37px] items-center justify-center rounded-lg border bg-[#e2e2e2] " +
                (name === "screen" ? "border-[#999] ring-2 ring-[#9cb6e6] ring-inset" : "border-[#aaa]")
              }
            >
              <Icon name={name} className="size-[25px]" />
            </button>
          ))}
        </div>
      </div>
    </form>
  );
}

const headCell = "border border-[#a0a0a0] bg-linear-to-b from-[#bbb] to-[#8e8e8e] p-0 font-bold text-white [text-shadow:1px_1px_1px_#333]";

function WorkTable() {
  return (
    <table className="w-full table-fixed border-collapse text-center text-[13px] leading-4 text-[#222]">
      <colgroup>
        <col />
        {months.map(({ m }) => (
          <col key={m} className={m === "02" || m === "08" ? "w-[60px]" : m < "04" ? "w-[85px]" : "w-[86px]"} />
        ))}
        <col className="w-[121px]" />
      </colgroup>
      <thead>
        <tr className="h-[22px]">
          <th rowSpan={2} className={headCell}>Project</th>
          <th colSpan={12} className={headCell}>2016</th>
          <th rowSpan={2} className={headCell}>Sum</th>
        </tr>
        <tr className="h-[17px]">
          {months.map(({ m }) => (
            <th key={m} className="border border-[#a0a0a0] bg-linear-to-b from-white to-[#e8e8e8] p-0 font-normal">{m}</th>
          ))}
        </tr>
      </thead>
      <tbody>
        <tr className="h-[17px]">
          <td rowSpan={2} className="border border-[#a0a0a0] bg-linear-to-b from-[#f2f2f2] to-[#d8d8d8] p-0 pl-[3px] text-left">X10projet</td>
          {months.map(({ m, real }) => (
            <td key={m} className="border border-[#a0a0a0] bg-white p-0">{real}</td>
          ))}
          <td className="border border-[#a0a0a0] bg-linear-to-b from-white to-[#e8e8e8] p-0">40</td>
        </tr>
        <tr className="h-[17px] text-[#777] italic">
          {months.map(({ m, plan }) => (
            <td key={m} className="border border-[#a0a0a0] bg-[#ffffdd] p-0">{plan}</td>
          ))}
          <td className="border border-[#a0a0a0] bg-linear-to-b from-white to-[#e8e8e8] p-0 text-[#222]">182</td>
        </tr>
        <tr className="h-[14px]">
          <td colSpan={14} className="p-0" />
        </tr>
        <tr className="h-[22px]">
          <td className={headCell}>Sum</td>
          {months.map(({ m, sum }) => (
            <td key={m} className={headCell}>{sum}</td>
          ))}
          <td className={headCell}>222</td>
        </tr>
      </tbody>
    </table>
  );
}

function Chart() {
  const x = (i) => 58 + i * 42.17;
  const y = (v) => 213 - (v / 30) * 187;
  let total = 0;
  const points = months.map(({ sum }, i) => {
    total += sum;
    return [x(i), y(total / 10)];
  });
  return (
    <svg viewBox="0 0 754 280" className="h-[280px] w-[754px]" fontFamily="DejaVu Sans Condensed, DejaVu Sans, sans-serif" fontSize="11">
      <rect x=".5" y=".5" width="753" height="278" rx="6" fill="#fafafa" stroke="#efefef" />
      <rect x="37" y="26" width="507" height="187" fill="#fcfcfc" />
      <path d="M37 26h507v187" fill="none" stroke="#ddd" strokeWidth="1.500" />
      <path d="M37 119.500h507" stroke="#e2e2e2" strokeDasharray="6 4" />
      {months.map(({ m, sum }, i) => (
        <g key={m}>
          <path d={`M${x(i)} 26v187`} stroke="#e2e2e2" strokeDasharray="6 4" />
          <rect x={x(i) - 16.5} y={y(sum)} width="33" height={213 - y(sum)} fill="#3232fb" stroke="#c8c8fa" />
          <path d={`M${x(i)} 213v6`} stroke="#000" />
          <text transform={`translate(${x(i) + 4} 268) rotate(-90)`} fontFamily="DejaVu Sans">2016-{m}</text>
        </g>
      ))}
      <path d="M37.500 25v188h513M31 26h6M31 119.500h6M31 213h6M544 26h6M544 119.500h6" fill="none" stroke="#000" strokeWidth="1.400" />
      <polyline points={points.map((p) => p.join(",")).join(" ")} fill="none" stroke="#222" strokeWidth="1.200" />
      {points.map(([cx, cy]) => (
        <circle key={cx} cx={cx} cy={cy} r="3.200" fill="#fff" stroke="#222" />
      ))}
      <g textAnchor="end">
        <text x="23" y="30">30</text>
        <text x="23" y="123">15</text>
        <text x="23" y="217">0</text>
      </g>
      <text x="554" y="30">300</text>
      <text x="554" y="123">150</text>
      <text x="554" y="217">0</text>
      <text transform="translate(588 147) rotate(-90)">cumulated</text>
      <rect x="600" y="34" width="87" height="21" rx="5" fill="#ddd" />
      <rect x="599" y="33" width="87" height="20" rx="5" fill="#f1f1f1" />
      <rect x="609" y="38" width="6" height="6" fill="#3232fb" />
      <text x="621" y="45">X10projet</text>
    </svg>
  );
}

function ReportResult() {
  return (
    <section className="relative min-h-0 flex-1 overflow-hidden text-[13px] text-[#111]">
      <div className="flex h-[30px] justify-between">
        <div className="flex w-[600px] items-center gap-[17px] leading-[14px]">
          <div className="w-[202px] bg-linear-to-b from-[#f4f4f4] to-[#dadada] text-center leading-[30px] font-bold">parameters</div>
          <div>
            project : X10projet
            <br />
            year : 2016
          </div>
        </div>
        <h2 className="ml-auto w-[235px] border border-[#999] bg-linear-to-b from-[#bbb] to-[#8e8e8e] text-center text-[20px] leading-[28px] font-bold whitespace-nowrap text-white [text-shadow:1px_1px_1px_#333]">
          Work plan per month
        </h2>
        <div className="w-[500px] pl-[379px] text-[12px] leading-8 whitespace-nowrap">18/02/2016 08:26</div>
      </div>
      <div className="mt-[14px] flex h-6 items-center pl-[42px]">
        <span className="h-6 w-6 border border-[#aaa] bg-white text-center leading-[22px]">1</span>
        <span className="ml-[5px] w-[122px]">real work</span>
        <span className="h-6 w-6 border border-[#aaa] bg-[#ffffdd] text-center leading-[22px] text-[#777] italic">1</span>
        <span className="ml-[5px] w-[144px]">planned</span>
        <span className="font-bold">unit for workload = days</span>
      </div>
      <div className="pr-11 pl-[42px]">
        <WorkTable />
      </div>
      <div className="mt-[6px] pl-[458px]">
        <Chart />
      </div>
      <div className="absolute top-8 left-[21px] h-[47px] w-[125px] border-[5px] border-[#a04ca0]" />
      <div className="absolute top-[35px] left-[182px] h-[45px] w-[122px] border-[5px] border-[#b87d5a]" />
      <div className="absolute top-[91px] right-[63px] h-9 w-[85px] border-4 border-b-[1px] border-[#a04ca0]" />
      <div className="absolute top-[121px] right-[55px] h-6 w-[98px] border-[5px] border-[#b87d5a]" />
      <div className="absolute top-[146px] right-[61px] h-[46px] w-[82px] border-[5px] border-[#22b14c]" />
    </section>
  );
}

function FrontWindow() {
  return (
    <div className="absolute top-[187px] bottom-0 left-[28px] flex w-full flex-col bg-[#fafafa]">
      <BrowserBar tabs={innerTabs} />
      <AppHeader menuIcon="target2" menu="Requirements & tests" project="X10projet" items={innerItems} />
      <div className="flex min-h-0 flex-1 font-['DejaVu_Sans_Condensed','DejaVu_Sans',sans-serif]">
        <Sidebar />
        <div className="flex w-[7px] shrink-0 items-center border-x border-[#999] bg-[#ddd]">
          <span className="ml-[1px] h-[22px] border-l-2 border-dotted border-white" />
        </div>
        <main className="flex min-w-0 flex-1 flex-col border-t border-white">
          <div className="flex h-[30px] shrink-0 items-center bg-linear-to-b from-[#8280c8] to-[#625e94] pl-[11px]">
            <Icon name="report" className="size-[25px]" />
            <h1 className="ml-[19px] text-[20px] font-bold text-white [text-shadow:2px_2px_2px_#222]">Reports</h1>
          </div>
          <ReportForm />
          <div className="flex h-[5px] shrink-0 items-center justify-center border-t border-b-2 border-t-[#999] border-b-[#545180] bg-[#ddd]">
            <span className="w-[22px] border-t-2 border-dotted border-white" />
          </div>
          <ReportResult />
        </main>
      </div>
    </div>
  );
}

export default function App() {
  return (
    <div className="relative h-screen overflow-hidden">
      <BackWindow />
      <FrontWindow />
    </div>
  );
}
